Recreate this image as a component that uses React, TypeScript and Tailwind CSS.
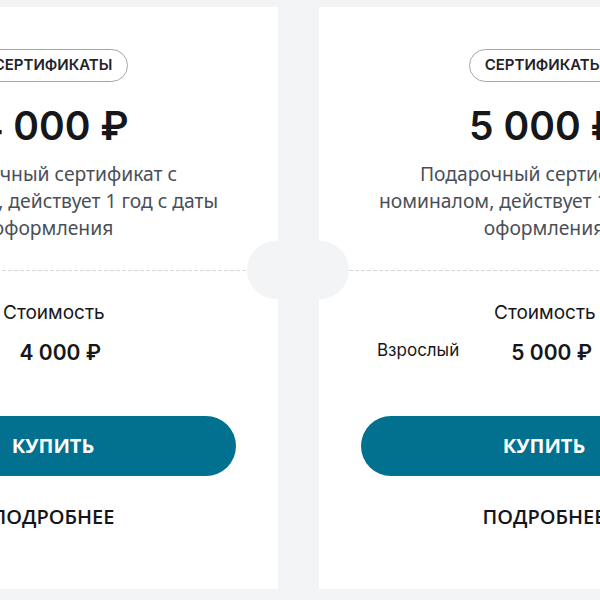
import React from "react";

type Cert = {
  price: string;
  label: string;
};

const certs: Cert[] = [
  { price: "4 000 ₽", label: "" },
  { price: "5 000 ₽", label: "Взрослый" },
];

function CertCard({ cert, side }: { cert: Cert; side: "left" | "right" }) {
  return (
    <div className="relative w-[450px] h-[582px] shrink-0 bg-white flex flex-col items-center overflow-hidden">
      {/* notch on the side facing the other card */}
      {side === "left" ? (
        <div className="absolute right-[-27px] top-[234px] w-[58px] h-[58px] rounded-full bg-[#f3f4f6]" />
      ) : (
        <div className="absolute left-[-28px] top-[234px] w-[58px] h-[58px] rounded-full bg-[#f3f4f6]" />
      )}

      <div className="mt-[42px] h-[33px] px-[15px] flex items-center rounded-full border border-[#a3a7ad] font-['Inter',sans-serif] text-[15px] font-semibold text-[#1f2329]">
        СЕРТИФИКАТЫ
      </div>

      <div className="mt-[20px] font-['Inter',sans-serif] text-[39px] leading-[48px] font-semibold text-[#15171a]">
        {cert.price}
      </div>

      <p className="mt-[10px] text-center font-['Noto_Sans',sans-serif] text-[19.3px] leading-[27px] text-[#4a4f57]">
        Подарочный сертификат с<br />
        номиналом, действует 1 год с даты<br />
        оформления
      </p>

      <div className="mt-[29px] self-stretch mx-[30px] h-px bg-[repeating-linear-gradient(90deg,#d6d8dc_0_4px,transparent_4px_6px)]" />

      <div className="mt-[29px] self-start pl-[58px] grid grid-cols-[117px_100px] font-['Inter',sans-serif] text-[#15171a]">
        <div />
        <div className="text-center text-[19px] leading-[26px] whitespace-nowrap">Стоимость</div>
        <div className="mt-[12px] text-[17px] leading-[24px]">{cert.label}</div>
        <div className="mt-[14px] text-right pr-[2px] text-[21px] leading-[26px] font-semibold whitespace-nowrap">
          {cert.price}
        </div>
      </div>

      <button className="mt-[50px] w-[366px] h-[60px] rounded-full bg-[#02708f] text-white font-['Open_Sans',sans-serif] text-[20px] leading-[28px] font-bold">
        КУПИТЬ
      </button>

      <button className="mt-[27px] font-['Open_Sans',sans-serif] text-[20px] leading-[28px] font-semibold text-[#14161c]">
        ПОДРОБНЕЕ
      </button>
    </div>
  );
}

export default function App() {
  return (
    <div className="w-[600px] h-[600px] bg-[#f3f4f6] pt-[7px] overflow-hidden">
      <div className="flex justify-center gap-[41px] pr-[3px]">
        <CertCard cert={certs[0]} side="left" />
        <CertCard cert={certs[1]} side="right" />
      </div>
    </div>
  );
}
